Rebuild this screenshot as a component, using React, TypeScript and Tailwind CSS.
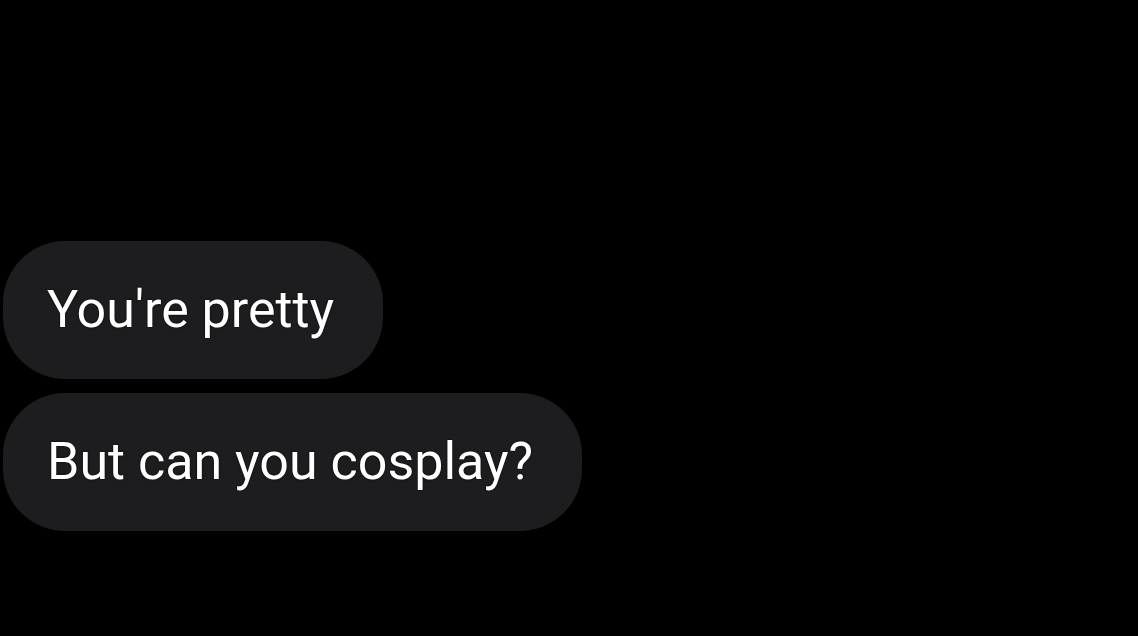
import React from 'react'

const messages = ["You're pretty", 'But can you cosplay?']

const App: React.FC = () => {
  return (
    <div className="w-[1138px] h-[636px] bg-black overflow-hidden">
      <div className="flex flex-col items-start gap-[14px] pt-[241px] pl-[3px]">
        {messages.map((text) => (
          <div
            key={text}
            className="h-[138px] flex items-center pl-[44px] pr-[49px] rounded-[62px] bg-[#1d1c1f] text-white text-[52px] leading-none [font-family:Roboto,'Liberation_Sans',sans-serif] [text-shadow:0_0_2px_#000]"
          >
            {text}
          </div>
        ))}
      </div>
    </div>
  )
}

export default App
